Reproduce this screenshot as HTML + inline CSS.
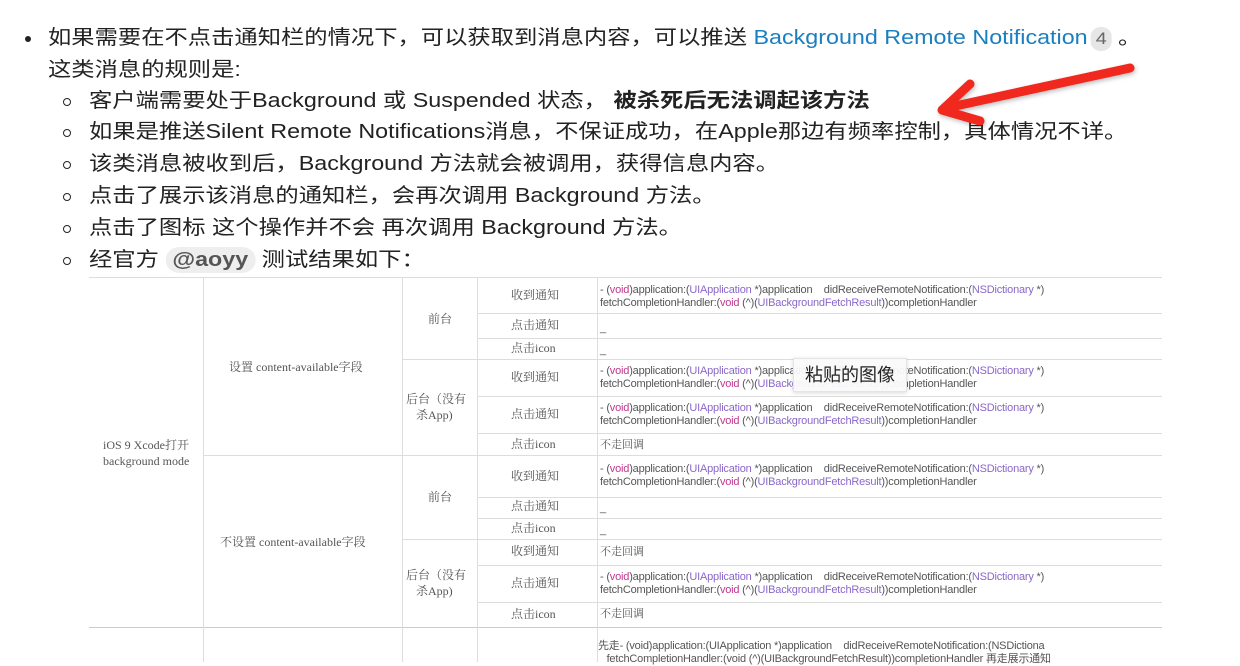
<!DOCTYPE html>
<html><head><meta charset="utf-8"><style>
html,body{margin:0;padding:0;background:#fff;}
body{width:1240px;height:662px;overflow:hidden;position:relative;font-family:"Liberation Sans","Noto Sans CJK SC",sans-serif;color:#222;}
.t{position:absolute;font-size:20px;white-space:nowrap;line-height:24px;transform:scaleX(1.165);transform-origin:0 0;}
.dot{position:absolute;width:6px;height:6px;border-radius:50%;background:#222;}
.circ{position:absolute;width:6px;height:6px;border-radius:50%;border:1.5px solid #222;}
.h{position:absolute;height:1px;background:#ddd;}
.v{position:absolute;width:1px;background:#ddd;}
.c{position:absolute;font-family:"Liberation Serif","Noto Serif CJK SC",serif;font-size:12px;color:#555;white-space:nowrap;line-height:16px;}
.k{position:absolute;font-size:11px;color:#555;white-space:nowrap;line-height:13px;letter-spacing:-0.2px;}
.p{color:#c2378e}.u{color:#8a67c9}
</style></head><body>
<div class="dot" style="left:25px;top:36px"></div>
<div class="t" style="left:48px;top:26px">如果需要在不点击通知栏的情况下，可以获取到消息内容，可以推送 <span style="color:#1a7fc1">Background Remote Notification</span><span style="display:inline-block;background:#e6e6e6;color:#666;border-radius:12px;font-size:17px;padding:0 4px;margin-left:3px;line-height:24px">4</span> 。</div>
<div class="t" style="left:48px;top:58px">这类消息的规则是:</div>
<div class="circ" style="left:63px;top:98px"></div>
<div class="t" style="left:89px;top:89px">客户端需要处于Background 或 Suspended 状态， <b>被杀死后无法调起该方法</b></div>
<div class="circ" style="left:63px;top:129px"></div>
<div class="t" style="left:89px;top:120px">如果是推送Silent Remote Notifications消息，不保证成功，在Apple那边有频率控制，具体情况不详。</div>
<div class="circ" style="left:63px;top:161px"></div>
<div class="t" style="left:89px;top:152px">该类消息被收到后，Background 方法就会被调用，获得信息内容。</div>
<div class="circ" style="left:63px;top:193px"></div>
<div class="t" style="left:89px;top:184px">点击了展示该消息的通知栏，会再次调用 Background 方法。</div>
<div class="circ" style="left:63px;top:225px"></div>
<div class="t" style="left:89px;top:216px">点击了图标 这个操作并不会 再次调用 Background 方法。</div>
<div class="circ" style="left:63px;top:257px"></div>
<div class="t" style="left:89px;top:248px">经官方 <span style="background:#eee;border-radius:12px;padding:2px 6px;color:#555;font-weight:bold">@aoyy</span> 测试结果如下：</div>

<div class="h" style="left:89px;top:277px;width:1073px"></div>
<div class="h" style="left:477px;top:313px;width:685px"></div>
<div class="h" style="left:477px;top:338px;width:685px"></div>
<div class="h" style="left:402px;top:359px;width:760px"></div>
<div class="h" style="left:477px;top:396px;width:685px"></div>
<div class="h" style="left:477px;top:433px;width:685px"></div>
<div class="h" style="left:203px;top:455px;width:959px"></div>
<div class="h" style="left:477px;top:497px;width:685px"></div>
<div class="h" style="left:477px;top:518px;width:685px"></div>
<div class="h" style="left:402px;top:539px;width:760px"></div>
<div class="h" style="left:477px;top:565px;width:685px"></div>
<div class="h" style="left:477px;top:602px;width:685px"></div>
<div class="h" style="left:89px;top:627px;width:1073px;background:#ccc"></div>
<div class="v" style="left:203px;top:277px;height:385px"></div>
<div class="v" style="left:402px;top:277px;height:385px"></div>
<div class="v" style="left:477px;top:277px;height:385px"></div>
<div class="v" style="left:597px;top:277px;height:385px"></div>

<div class="c" style="left:103px;top:437px">iOS 9 Xcode打开</div>
<div class="c" style="left:103px;top:453px">background mode</div>
<div class="c" style="left:229px;top:359px">设置 content-available字段</div>
<div class="c" style="left:220px;top:534px">不设置 content-available字段</div>
<div class="c" style="left:428px;top:311px">前台</div>
<div class="c" style="left:406px;top:391px">后台（没有</div>
<div class="c" style="left:416px;top:407px">杀App)</div>
<div class="c" style="left:428px;top:489px">前台</div>
<div class="c" style="left:406px;top:567px">后台（没有</div>
<div class="c" style="left:416px;top:583px">杀App)</div>

<div class="c" style="left:511px;top:287px">收到通知</div>
<div class="c" style="left:511px;top:317px">点击通知</div>
<div class="c" style="left:511px;top:340px">点击icon</div>
<div class="c" style="left:511px;top:369px">收到通知</div>
<div class="c" style="left:511px;top:406px">点击通知</div>
<div class="c" style="left:511px;top:436px">点击icon</div>
<div class="c" style="left:511px;top:468px">收到通知</div>
<div class="c" style="left:511px;top:498px">点击通知</div>
<div class="c" style="left:511px;top:520px">点击icon</div>
<div class="c" style="left:511px;top:543px">收到通知</div>
<div class="c" style="left:511px;top:575px">点击通知</div>
<div class="c" style="left:511px;top:606px">点击icon</div>

<div class="k" style="left:600px;top:284px">- (<span class="p">void</span>)application:(<span class="u">UIApplication</span> *)application &nbsp;&nbsp; didReceiveRemoteNotification:(<span class="u">NSDictionary</span> *)<br>fetchCompletionHandler:(<span class="p">void</span> (^)(<span class="u">UIBackgroundFetchResult</span>))completionHandler</div>
<div class="k" style="left:600px;top:322px">_</div>
<div class="k" style="left:600px;top:344px">_</div>
<div class="k" style="left:600px;top:365px">- (<span class="p">void</span>)application:(<span class="u">UIApplication</span> *)application &nbsp;&nbsp; didReceiveRemoteNotification:(<span class="u">NSDictionary</span> *)<br>fetchCompletionHandler:(<span class="p">void</span> (^)(<span class="u">UIBackgroundFetchResult</span>))completionHandler</div>
<div class="k" style="left:600px;top:402px">- (<span class="p">void</span>)application:(<span class="u">UIApplication</span> *)application &nbsp;&nbsp; didReceiveRemoteNotification:(<span class="u">NSDictionary</span> *)<br>fetchCompletionHandler:(<span class="p">void</span> (^)(<span class="u">UIBackgroundFetchResult</span>))completionHandler</div>
<div class="c" style="left:600px;top:437px;font-size:11px">不走回调</div>
<div class="k" style="left:600px;top:463px">- (<span class="p">void</span>)application:(<span class="u">UIApplication</span> *)application &nbsp;&nbsp; didReceiveRemoteNotification:(<span class="u">NSDictionary</span> *)<br>fetchCompletionHandler:(<span class="p">void</span> (^)(<span class="u">UIBackgroundFetchResult</span>))completionHandler</div>
<div class="k" style="left:600px;top:502px">_</div>
<div class="k" style="left:600px;top:524px">_</div>
<div class="c" style="left:600px;top:544px;font-size:11px">不走回调</div>
<div class="k" style="left:600px;top:571px">- (<span class="p">void</span>)application:(<span class="u">UIApplication</span> *)application &nbsp;&nbsp; didReceiveRemoteNotification:(<span class="u">NSDictionary</span> *)<br>fetchCompletionHandler:(<span class="p">void</span> (^)(<span class="u">UIBackgroundFetchResult</span>))completionHandler</div>
<div class="c" style="left:600px;top:606px;font-size:11px">不走回调</div>
<div class="k" style="left:598px;top:640px">先走- (void)application:(UIApplication *)application &nbsp;&nbsp; didReceiveRemoteNotification:(NSDictiona<br>&nbsp;&nbsp;&nbsp;fetchCompletionHandler:(void (^)(UIBackgroundFetchResult))completionHandler 再走展示通知</div>

<div style="position:absolute;left:793px;top:358px;width:112px;height:32px;background:rgba(250,250,250,0.95);border:1px solid #e4e4e4;box-shadow:0 1px 4px rgba(0,0,0,0.15);font-size:18px;line-height:32px;text-align:center;color:#222">粘贴的图像</div>

<svg style="position:absolute;left:0;top:0" width="1240" height="662">
<g stroke="#f0281e" stroke-width="9" stroke-linecap="round" stroke-linejoin="round" fill="none" style="filter:drop-shadow(1px 2px 2px rgba(0,0,0,0.25))">
<path d="M1130 68 L946 108"/>
<path d="M970 84 L942 110 L980 121"/>
</g>
</svg>
</body></html>
